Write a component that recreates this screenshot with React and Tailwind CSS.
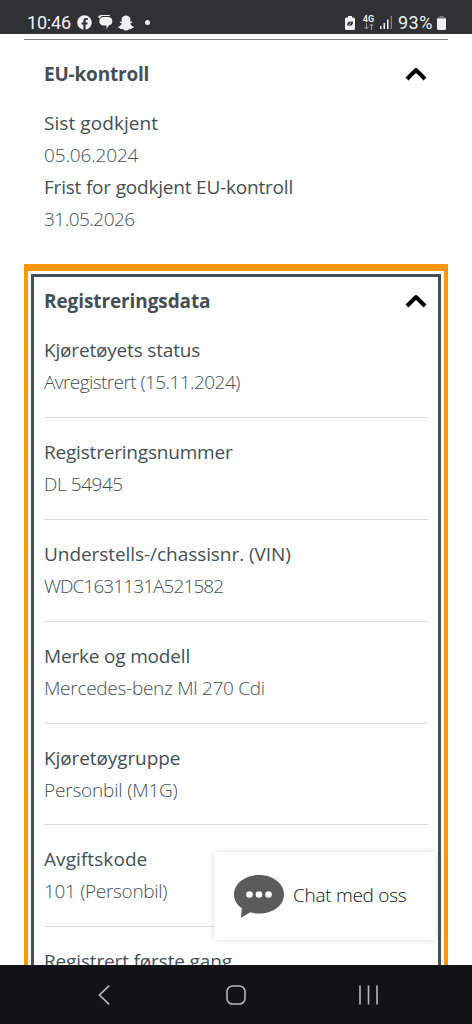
import React, { useState } from 'react';
import { FaFacebook, FaSnapchatGhost } from 'react-icons/fa';

const inspection = [
  { label: 'Sist godkjent', value: '05.06.2024', labelClass: 'tracking-[0.07px]', valueClass: 'tracking-[-0.15px]' },
  { label: 'Frist for godkjent EU-kontroll', value: '31.05.2026', labelClass: 'tracking-[-0.2px]', valueClass: 'tracking-[-0.52px]' },
];

const registration = [
  { label: 'Kjøretøyets status', value: 'Avregistrert (15.11.2024)', labelClass: 'tracking-[-0.18px]', valueClass: 'tracking-[-0.57px]' },
  { label: 'Registreringsnummer', value: 'DL 54945', labelClass: 'tracking-[-0.2px]', valueClass: 'tracking-[-0.45px]' },
  { label: 'Understells-/chassisnr. (VIN)', value: 'WDC1631131A521582', labelClass: 'tracking-[-0.06px]', valueClass: 'tracking-[-0.9px]' },
  { label: 'Merke og modell', value: 'Mercedes-benz Ml 270 Cdi', labelClass: 'tracking-[-0.18px]', valueClass: 'tracking-[-0.28px]' },
  { label: 'Kjøretøygruppe', value: 'Personbil (M1G)', labelClass: 'tracking-[-0.1px]', valueClass: 'tracking-[-0.18px]' },
  { label: 'Avgiftskode', value: '101 (Personbil)', labelClass: 'tracking-[0.07px]', valueClass: 'tracking-[-0.32px]' },
  { label: 'Registrert første gang', value: '', labelClass: 'tracking-[-0.15px]', valueClass: '' },
];

function StatusBar() {
  return (
    <header className="flex h-[34px] shrink-0 items-center bg-[#303134] pt-[11px] pr-[26px] pl-[27px] font-['Roboto',sans-serif] text-[#f1f1f1]">
      <span className="w-[50px] text-[18px] leading-none tracking-[-0.2px] whitespace-nowrap">10:46</span>
      <FaFacebook className="size-[15px]" />
      <svg className="ml-[6px] h-[15px] w-[15px]" viewBox="0 0 15 15" fill="currentColor">
        <path d="M4 0h6.500c1 0 1.500.5 1.800 1H4.500C3 1 2.200 2 2 3.500L0 2C.6.700 1.800 0 4 0z" />
        <path d="M5.500 2h4.500a4.200 4.200 0 0 1 1 8.300L8.500 14v-3.500h-3a4.250 4.250 0 0 1 0-8.500z" />
      </svg>
      <FaSnapchatGhost className="ml-[5px] size-[16px]" />
      <span className="ml-[11px] size-[5px] rounded-full bg-current" />
      <div className="ml-auto flex items-center">
        <svg className="h-[14px] w-[10px]" viewBox="0 0 10 14" fill="currentColor">
          <path d="M3 0h4v1.500h1.500A1.500 1.500 0 0 1 10 3v9.500a1.500 1.500 0 0 1-1.500 1.500h-7A1.500 1.500 0 0 1 0 12.500V3a1.500 1.500 0 0 1 1.500-1.500H3z" />
          <path d="M2 10c0-4 2-4.500 6-4.500 0 4-2 5-4.500 4z" fill="#303134" />
          <path d="M2 10.500 6 7" stroke="#f1f1f1" strokeWidth=".7" />
        </svg>
        <div className="ml-[8px] flex w-[11px] flex-col items-center">
          <span className="text-[9px] leading-[8px] font-semibold">4G</span>
          <svg className="h-[7px] w-[10px] text-[#a0a0a2]" viewBox="0 0 10 7" fill="none" stroke="currentColor" strokeWidth="1">
            <path d="M2.500 0v6M.5 4l2 2 2-2M7.500 7V1M5.500 3l2-2 2 2" />
          </svg>
        </div>
        <svg className="ml-[6px] h-[13px] w-[12px]" viewBox="0 0 12 13" fill="currentColor">
          <path d="M0 10h1.500v3H0zM3.500 7H5v6H3.500zM7 3.500h1.500V13H7z" />
          <path d="M10.500 0H12v13h-1.500z" fill="#77787b" />
        </svg>
        <span className="ml-[6px] w-[39px] text-[18px] leading-none tracking-[0.5px] whitespace-nowrap">93%</span>
        <svg className="h-[14px] w-[9px]" viewBox="0 0 9 14" fill="currentColor">
          <path d="M2.500 0h4v1.300h1A1.500 1.500 0 0 1 9 2.700H0a1.500 1.500 0 0 1 1.500-1.400h1z" fill="#77787b" />
          <path d="M0 2.500h9v10A1.500 1.500 0 0 1 7.500 14h-6A1.500 1.500 0 0 1 0 12.500z" />
        </svg>
      </div>
    </header>
  );
}

function SectionHeader({ title, titleClass, open, onToggle }) {
  return (
    <button type="button" onClick={onToggle} className="flex h-8 w-full items-center justify-between text-left">
      <span className={`text-[19px] leading-8 font-bold whitespace-nowrap ${titleClass}`}>{title}</span>
      <svg
        className={`mr-px h-[14px] w-[22px] text-black ${open ? '' : 'rotate-180'}`}
        viewBox="0 0 22 14"
        fill="none"
        stroke="currentColor"
        strokeWidth="4"
      >
        <path d="M2 12 11 3l9 9" strokeLinejoin="round" />
      </svg>
    </button>
  );
}

function Field({ label, value, labelClass, valueClass }) {
  return (
    <>
      <dt className={`h-[32px] text-[19px] leading-[32px] whitespace-nowrap ${labelClass}`}>{label}</dt>
      <dd className={`h-[32px] text-[19px] leading-[32px] font-light whitespace-nowrap ${valueClass}`}>{value}</dd>
    </>
  );
}

function ChatButton() {
  return (
    <button
      type="button"
      className="absolute top-[852px] left-[214px] flex h-[88px] w-[222px] items-center bg-white pl-5 text-[#111] shadow-[0_0_6px_rgba(0,0,0,0.13)]"
    >
      <svg className="h-[44px] w-[50px]" viewBox="0 0 50 44">
        <path
          d="M25 1C39 1 50 9.500 50 20.500S39 39.500 25 39.500c-3 0-6-.3-8.500-1.200L7 43.800l.8-9.500C3 31 0 26 0 20.500 0 9.500 11 1 25 1z"
          fill="#5b5b5b"
        />
        <circle cx="15.500" cy="20.500" r="3.300" fill="#fff" />
        <circle cx="25" cy="20.500" r="3.300" fill="#fff" />
        <circle cx="34.500" cy="20.500" r="3.300" fill="#fff" />
      </svg>
      <span className="ml-[9px] pb-[2px] text-[19px] font-light tracking-[-0.28px] whitespace-nowrap">Chat med oss</span>
    </button>
  );
}

function NavigationBar() {
  return (
    <nav className="flex h-[59px] shrink-0 items-center justify-between bg-[#121317] pr-[94px] pl-[98px] text-[#b8b8ba]">
      <svg className="h-[20px] w-[12px]" viewBox="0 0 12 20" fill="none" stroke="currentColor" strokeWidth="1.700">
        <path d="M11.200.7 1.500 10l9.700 9.300" />
      </svg>
      <svg className="ml-[2px] size-[20px]" viewBox="0 0 20 20" fill="none" stroke="currentColor" strokeWidth="1.600">
        <rect x="1" y="1" width="18" height="18" rx="5.500" />
      </svg>
      <svg className="h-[20px] w-[19px]" viewBox="0 0 19 20" fill="none" stroke="currentColor" strokeWidth="1.600">
        <path d="M1 .5v19M9.500.5v19M18 .5v19" />
      </svg>
    </nav>
  );
}

function App() {
  const [inspectionOpen, setInspectionOpen] = useState(true);
  const [registrationOpen, setRegistrationOpen] = useState(true);

  return (
    <div className="relative flex h-[1024px] w-[472px] flex-col overflow-hidden bg-white font-['Open_Sans','Noto_Sans',sans-serif] text-[#444f55]">
      <StatusBar />

      <main className="min-h-0 flex-1 overflow-hidden px-6 pt-[5px]">
        <section className="h-[225px] border-t border-[#7e8688] pt-[18px] pr-[20px] pl-[20px]">
          <SectionHeader
            title="EU-kontroll"
            titleClass="tracking-[-0.2px]"
            open={inspectionOpen}
            onToggle={() => setInspectionOpen(!inspectionOpen)}
          />
          {inspectionOpen && (
            <dl className="pt-[17px]">
              {inspection.map((item) => (
                <Field key={item.label} {...item} />
              ))}
            </dl>
          )}
        </section>

        <section className="border-x-4 border-t-[7px] border-[#fb970d] px-[3px] pt-[3px]">
          <div className="border-x-[3px] border-t-[3px] border-[#465157] pt-2 pr-[10px] pl-[10px]">
            <SectionHeader
              title="Registreringsdata"
              titleClass="tracking-[-0.1px]"
              open={registrationOpen}
              onToggle={() => setRegistrationOpen(!registrationOpen)}
            />
            {registrationOpen && (
              <div className="pt-[17px]">
                {registration.map((item) => (
                  <dl key={item.label} className="mb-[18px] h-[83.900px] border-b border-[#dadddd]">
                    <Field {...item} />
                  </dl>
                ))}
              </div>
            )}
          </div>
        </section>
      </main>

      <NavigationBar />
      <ChatButton />
    </div>
  );
}

export default App;
